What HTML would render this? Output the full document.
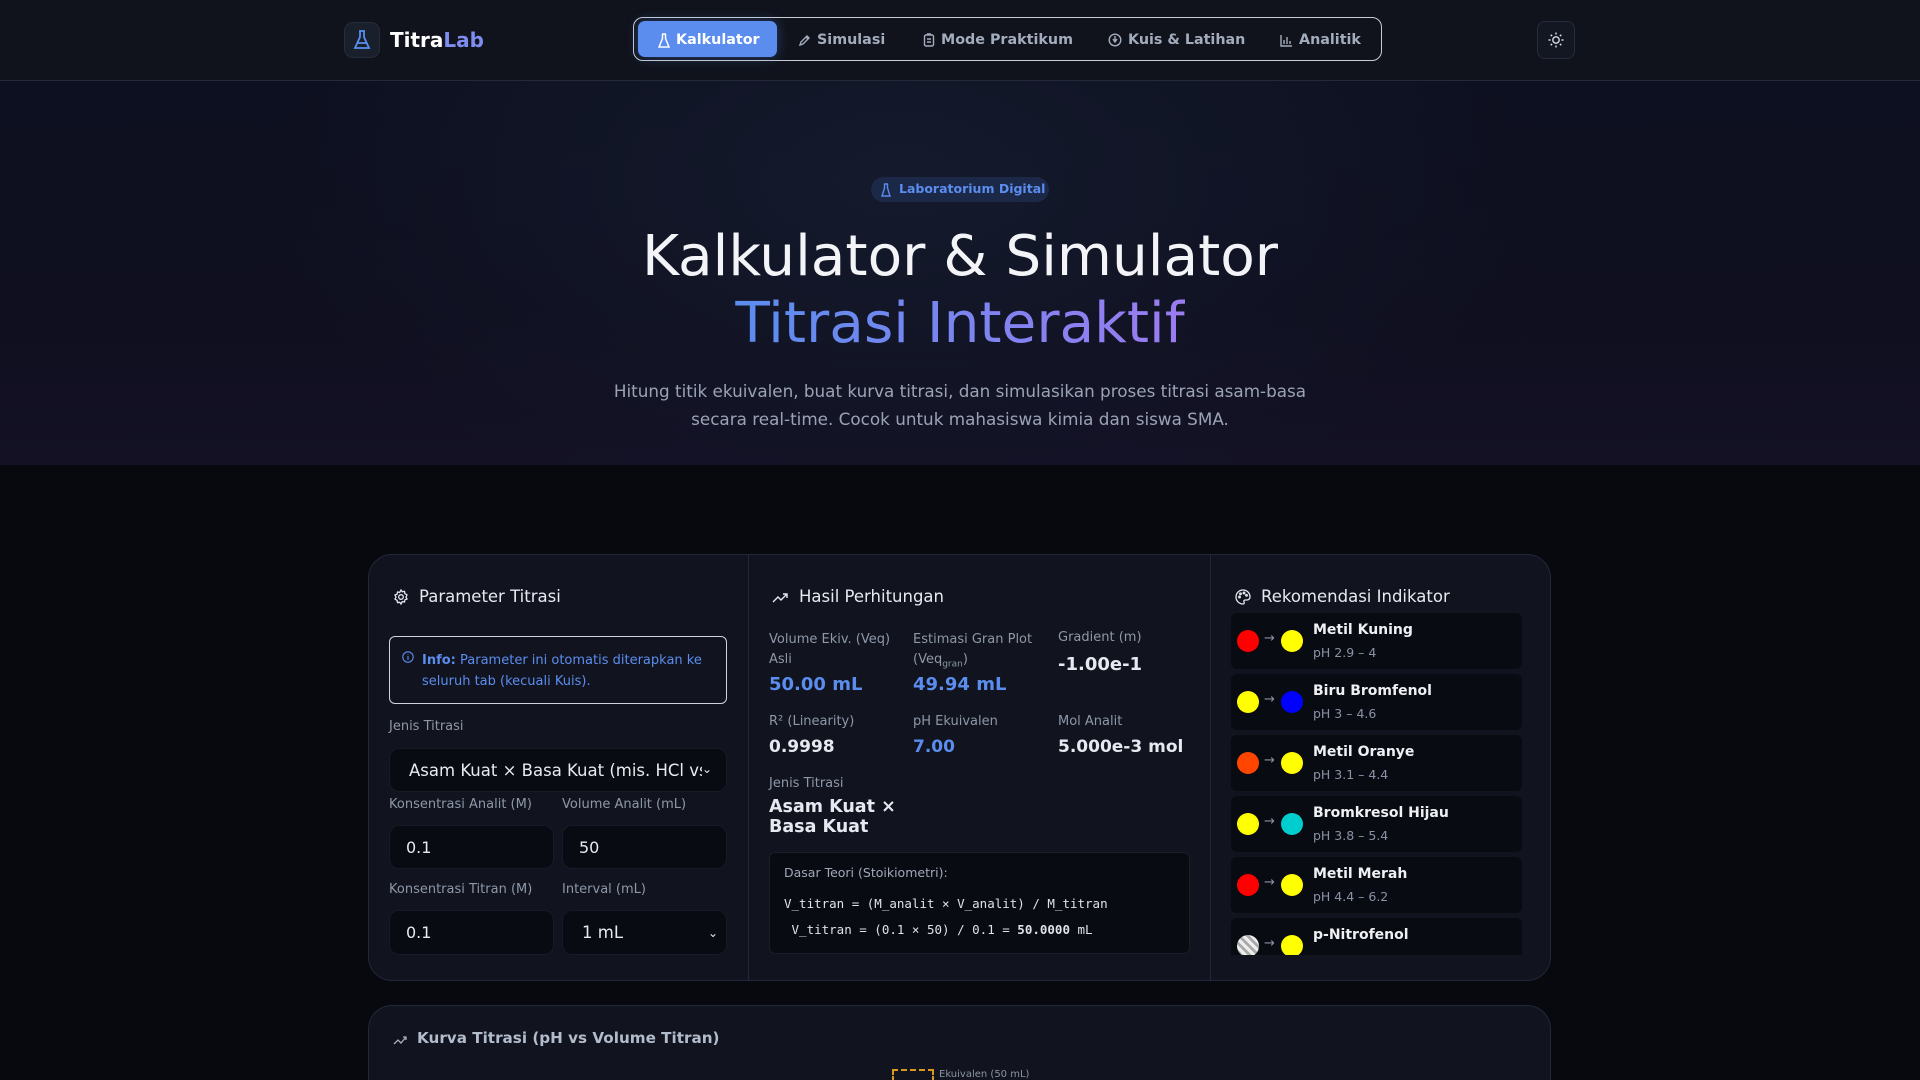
<!DOCTYPE html>
<html style="overflow:hidden;width:1920px;height:1080px"><head><meta charset="utf-8"><style>
*{box-sizing:border-box;margin:0;padding:0}
body{width:1920px;height:1080px;overflow:hidden;background:#07090f;font-family:"DejaVu Sans","Liberation Sans",sans-serif;color:#e6e9f0;position:relative}
.abs{position:absolute}
header{position:absolute;left:0;top:0;width:1920px;height:81px;background:#10131c;border-bottom:1px solid #252a38}
.hero{position:absolute;left:0;top:81px;width:1920px;height:384px;background:radial-gradient(ellipse 900px 500px at 900px 100px,#141a2c 0%,transparent 70%),linear-gradient(180deg,#0d1020 0%,#0f0f1f 60%,#141125 100%)}
.nav{left:633px;top:17px;width:749px;height:44px;border:1.5px solid #c9ccd6;border-radius:10px}
.navi{position:absolute;top:4px;height:36px;display:flex;align-items:center;font-size:14.3px;font-weight:bold;color:#a3acbd;gap:6px}
.card{background:#11141e;border:1px solid #22273a;border-radius:24px}
.lbl{font-size:13px;color:#8e97a8}
.inp{position:absolute;background:#080b12;border:1px solid #171b27;border-radius:10px;font-size:16px;color:#e8eaef;display:flex;align-items:center;padding-left:16px}
.val{font-size:18px;font-weight:bold}
.ind{position:absolute;left:0;width:291px;height:56px;background:#090b12;border-radius:6px}
.c{position:absolute;top:17px;width:22px;height:22px;border-radius:50%}
.ar{position:absolute;left:33px;top:18px;color:#8a92a2;font-size:13px}
.nm{position:absolute;left:82px;top:9px;font-size:14px;font-weight:bold;color:#eef0f4}
.ph{position:absolute;left:82px;top:32px;font-size:12.5px;color:#8a93a6}
</style></head><body>
<header>
 <div class="abs" style="left:344px;top:22px;width:36px;height:36px;border-radius:9px;background:#1a1f2c;border:1px solid #262c3b"></div>
 <svg class="abs" style="left:352px;top:29px" width="20" height="22" viewBox="0 0 20 22" fill="none" stroke="#5b8def" stroke-width="1.8"><path d="M7 2h6M8 2v6L3 19h14L12 8V2M5 14h10"/></svg>
 <div class="abs" style="left:390px;top:28px;font-size:20px;font-weight:bold;color:#fff">Titra<span style="color:#7f8cf0">Lab</span></div>
 <div class="abs nav">
  <div class="abs" style="left:4px;top:3px;width:139px;height:36px;background:#5b8def;border-radius:7px;box-shadow:0 0 12px rgba(91,141,239,.35)"></div>
  <div class="navi" style="left:24px;color:#fff"><svg width="12" height="15" viewBox="0 0 12 15" fill="none" stroke="#fff" stroke-width="1.5"><path d="M4 1h4M4.5 1v4.5L1 14h10L7.5 5.5V1"/></svg>Kalkulator</div>
  <div class="navi" style="left:164px"><svg width="13" height="13" viewBox="0 0 13 13" fill="none" stroke="#a3acbd" stroke-width="1.4"><path d="M2 11l1-3 6-6 2 2-6 6zM8 3l2 2"/></svg>Simulasi</div>
  <div class="navi" style="left:289px"><svg width="12" height="14" viewBox="0 0 12 14" fill="none" stroke="#a3acbd" stroke-width="1.4"><rect x="1.5" y="2" width="9" height="11" rx="1.5"/><path d="M4 1h4M4 6h4M4 9h4"/></svg>Mode Praktikum</div>
  <div class="navi" style="left:474px"><svg width="14" height="14" viewBox="0 0 14 14" fill="none" stroke="#a3acbd" stroke-width="1.4"><circle cx="7" cy="7" r="5.8"/><path d="M7 3v5M5 6l2 3 2-3"/></svg>Kuis &amp; Latihan</div>
  <div class="navi" style="left:646px"><svg width="13" height="13" viewBox="0 0 13 13" fill="none" stroke="#a3acbd" stroke-width="1.4"><path d="M1 1v11h11M4 10V6M7 10V3M10 10V7"/></svg>Analitik</div>
 </div>
 <div class="abs" style="left:1537px;top:21px;width:38px;height:38px;border-radius:8px;background:#131722;border:1px solid #262c3b"></div>
 <svg class="abs" style="left:1547px;top:31px" width="18" height="18" viewBox="0 0 18 18" fill="none" stroke="#d7dbe3" stroke-width="1.4"><circle cx="9" cy="9" r="3.2"/><path d="M9 1.5v2M9 14.5v2M1.5 9h2M14.5 9h2M3.7 3.7l1.4 1.4M12.9 12.9l1.4 1.4M3.7 14.3l1.4-1.4M12.9 5.1l1.4-1.4"/></svg>
</header>
<div class="hero"></div>
<div class="abs" style="left:871px;top:177px;width:178px;height:25px;border-radius:13px;background:#1c2847"></div>
<svg class="abs" style="left:881px;top:183px" width="10" height="14" viewBox="0 0 10 14" fill="none" stroke="#5b8def" stroke-width="1.4"><path d="M3 1h4M3.5 1v4L1 13h8L6.5 5V1"/></svg>
<div class="abs" style="left:899px;top:181px;font-size:12.5px;font-weight:bold;color:#5b8def">Laboratorium Digital</div>
<div class="abs" style="left:0;width:1920px;top:224px;text-align:center;font-size:56.5px;color:#f3f4f7;line-height:66px">Kalkulator &amp; Simulator</div>
<div class="abs" style="left:0;width:1920px;top:291px;text-align:center;font-size:56.5px;line-height:66px"><span style="background:linear-gradient(90deg,#5b8def,#9b7cf0);-webkit-background-clip:text;background-clip:text;color:transparent">Titrasi Interaktif</span></div>
<div class="abs" style="left:0;width:1920px;top:377px;text-align:center;font-size:16.8px;color:#9aa3b5;line-height:28px">Hitung titik ekuivalen, buat kurva titrasi, dan simulasikan proses titrasi asam-basa<br>secara real-time. Cocok untuk mahasiswa kimia dan siswa SMA.</div>

<div class="abs card" style="left:368px;top:554px;width:1183px;height:427px"></div>
<div class="abs" style="left:748px;top:555px;width:1px;height:425px;background:#22273a"></div>
<div class="abs" style="left:1210px;top:555px;width:1px;height:425px;background:#22273a"></div>

<svg class="abs" style="left:393px;top:589px" width="16" height="16" viewBox="0 0 16 16" fill="none" stroke="#e6e9f0" stroke-width="1.3"><circle cx="8" cy="8" r="2.3"/><path d="M8 1l1.3 1.8 2.2-.4.4 2.2L14 6l-1 2 1 2-2.1.8-.4 2.2-2.2-.4L8 15l-1.3-1.8-2.2.4-.4-2.2L2 10l1-2-1-2 2.1-.8.4-2.2 2.2.4z"/></svg>
<div class="abs" style="left:419px;top:587px;font-size:16.5px">Parameter Titrasi</div>
<div class="abs" style="left:389px;top:636px;width:338px;height:68px;border:1.5px solid #cfd3dc;border-radius:6px"></div>
<svg class="abs" style="left:402px;top:651px" width="12" height="12" viewBox="0 0 12 12" fill="none" stroke="#5b8def" stroke-width="1.1"><circle cx="6" cy="6" r="5.2"/><path d="M6 5v4M6 3v.5"/></svg>
<div class="abs" style="left:422px;top:650px;width:300px;font-size:13px;line-height:21px;color:#5b8def"><b>Info:</b> Parameter ini otomatis diterapkan ke seluruh tab (kecuali Kuis).</div>
<div class="abs lbl" style="left:389px;top:719px">Jenis Titrasi</div>
<div class="inp" style="left:389px;top:748px;width:338px;height:44px;font-size:16.5px;padding-left:19px;overflow:hidden;white-space:nowrap">Asam Kuat × Basa Kuat (mis. HCl vs<span style="position:absolute;right:0;top:0;width:24px;height:42px;background:#080b12;font-size:12px;line-height:40px">⌄</span></div>
<div class="abs lbl" style="left:389px;top:797px">Konsentrasi Analit (M)</div>
<div class="abs lbl" style="left:562px;top:797px">Volume Analit (mL)</div>
<div class="inp" style="left:389px;top:825px;width:165px;height:44px">0.1</div>
<div class="inp" style="left:562px;top:825px;width:165px;height:44px">50</div>
<div class="abs lbl" style="left:389px;top:882px">Konsentrasi Titran (M)</div>
<div class="abs lbl" style="left:562px;top:882px">Interval (mL)</div>
<div class="inp" style="left:389px;top:910px;width:165px;height:45px">0.1</div>
<div class="inp" style="left:562px;top:910px;width:165px;height:45px;font-size:16.5px;padding-left:19px">1 mL<span style="position:absolute;right:8px;font-size:12px">⌄</span></div>

<svg class="abs" style="left:772px;top:590px" width="16" height="14" viewBox="0 0 16 14" fill="none" stroke="#e6e9f0" stroke-width="1.4"><path d="M1 12l5-5 3 3 6-6M11 4h4v4"/></svg>
<div class="abs" style="left:799px;top:587px;font-size:16.5px">Hasil Perhitungan</div>
<div class="abs lbl" style="left:769px;top:630px;line-height:20px;width:130px">Volume Ekiv. (Veq) Asli</div>
<div class="abs lbl" style="left:913px;top:630px;line-height:20px;width:140px">Estimasi Gran Plot (Veq<sub style="font-size:9px">gran</sub>)</div>
<div class="abs lbl" style="left:1058px;top:630px">Gradient (m)</div>
<div class="abs val" style="left:769px;top:674px;color:#5b8def">50.00 mL</div>
<div class="abs val" style="left:913px;top:674px;color:#5b8def">49.94 mL</div>
<div class="abs val" style="left:1058px;top:654px">-1.00e-1</div>
<div class="abs lbl" style="left:769px;top:714px">R² (Linearity)</div>
<div class="abs lbl" style="left:913px;top:714px">pH Ekuivalen</div>
<div class="abs lbl" style="left:1058px;top:714px">Mol Analit</div>
<div class="abs val" style="left:769px;top:737px;font-size:17px">0.9998</div>
<div class="abs val" style="left:913px;top:737px;color:#5b8def;font-size:17px">7.00</div>
<div class="abs val" style="left:1058px;top:737px;font-size:17px">5.000e-3 mol</div>
<div class="abs lbl" style="left:769px;top:776px">Jenis Titrasi</div>
<div class="abs val" style="left:769px;top:797px;font-size:17.5px;line-height:20px">Asam Kuat ×<br>Basa Kuat</div>
<div class="abs" style="left:769px;top:852px;width:421px;height:102px;background:#090b12;border:1px solid #1a1e2b;border-radius:6px"></div>
<div class="abs" style="left:784px;top:865px;font-size:12.5px;color:#a0a8b8">Dasar Teori (Stoikiometri):</div>
<div class="abs" style="left:784px;top:896px;font-family:'DejaVu Sans Mono',monospace;font-size:12.5px;color:#dfe2e8">V_titran = (M_analit × V_analit) / M_titran</div>
<div class="abs" style="left:784px;top:922px;font-family:'DejaVu Sans Mono',monospace;font-size:12.5px;color:#dfe2e8">&nbsp;V_titran = (0.1 × 50) / 0.1 = <b>50.0000</b> mL</div>

<svg class="abs" style="left:1235px;top:589px" width="16" height="16" viewBox="0 0 16 16" fill="none" stroke="#e6e9f0" stroke-width="1.3"><path d="M8 1a7 7 0 0 0 0 14c1.2 0 1.6-1 1-2-.6-1 0-2 1.2-2H12a3 3 0 0 0 3-3c0-4-3-7-7-7z"/><circle cx="4.5" cy="8" r=".8"/><circle cx="5.5" cy="4.8" r=".8"/><circle cx="9" cy="4" r=".8"/><circle cx="11.5" cy="6.3" r=".8"/></svg>
<div class="abs" style="left:1261px;top:587px;font-size:16.5px">Rekomendasi Indikator</div>
<div class="abs" style="left:1231px;top:613px;width:291px;height:342px;overflow:hidden">
 <div class="ind" style="top:0"><div class="c" style="left:6px;background:#f00"></div><span class="ar">→</span><div class="c" style="left:50px;background:#ff0"></div><div class="nm">Metil Kuning</div><div class="ph">pH 2.9 – 4</div></div>
 <div class="ind" style="top:61px"><div class="c" style="left:6px;background:#ff0"></div><span class="ar">→</span><div class="c" style="left:50px;background:#00f"></div><div class="nm">Biru Bromfenol</div><div class="ph">pH 3 – 4.6</div></div>
 <div class="ind" style="top:122px"><div class="c" style="left:6px;background:#ff4500"></div><span class="ar">→</span><div class="c" style="left:50px;background:#ff0"></div><div class="nm">Metil Oranye</div><div class="ph">pH 3.1 – 4.4</div></div>
 <div class="ind" style="top:183px"><div class="c" style="left:6px;background:#ff0"></div><span class="ar">→</span><div class="c" style="left:50px;background:#00cdcd"></div><div class="nm">Bromkresol Hijau</div><div class="ph">pH 3.8 – 5.4</div></div>
 <div class="ind" style="top:244px"><div class="c" style="left:6px;background:#f00"></div><span class="ar">→</span><div class="c" style="left:50px;background:#ff0"></div><div class="nm">Metil Merah</div><div class="ph">pH 4.4 – 6.2</div></div>
 <div class="ind" style="top:305px"><div class="c" style="left:6px;background:repeating-linear-gradient(45deg,#eee 0 3px,#aaa 3px 6px)"></div><span class="ar">→</span><div class="c" style="left:50px;background:#ff0"></div><div class="nm">p-Nitrofenol</div></div>
</div>

<div class="abs card" style="left:368px;top:1005px;width:1183px;height:100px"></div>
<svg class="abs" style="left:393px;top:1033px" width="14" height="12" viewBox="0 0 14 12" fill="none" stroke="#a6afc0" stroke-width="1.3"><path d="M1 11l4-4 3 3 5-6M10 4h3v3"/></svg>
<div class="abs" style="left:417px;top:1029px;font-size:15.2px;font-weight:bold;color:#b3bccc">Kurva Titrasi (pH vs Volume Titran)</div>
<div class="abs" style="left:892px;top:1069px;width:42px;height:20px;border:2px dashed #d89a1e;border-bottom:none"></div>
<div class="abs" style="left:939px;top:1069px;font-size:10px;color:#8b93a5">Ekuivalen (50 mL)</div>
</body></html>
